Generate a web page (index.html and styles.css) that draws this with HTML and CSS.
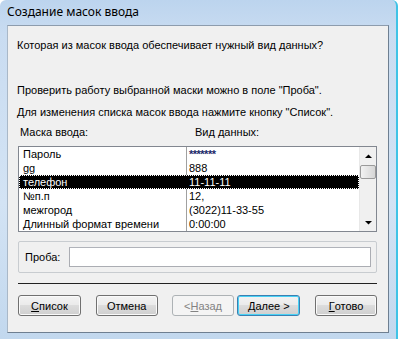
FILE: index.html
```html
<!DOCTYPE html>
<html lang="ru">
<head>
<meta charset="utf-8">
<link rel="stylesheet" href="styles.css">
</head>
<body>
<div class="window">
  <div class="titlebar">Создание масок ввода</div>
  <div class="client">
    <p class="question">Которая из масок ввода обеспечивает нужный вид данных?</p>
    <p class="hint hint1">Проверить работу выбранной маски можно в поле "Проба".</p>
    <p class="hint hint2">Для изменения списка масок ввода нажмите кнопку "Список".</p>
    <div class="headers"><span class="h1">Маска ввода:</span><span class="h2">Вид данных:</span></div>
    <div class="listbox">
      <div class="rows">
        <div class="row"><span class="c1">Пароль</span><span class="c2 stars">*******</span></div>
        <div class="row"><span class="c1">gg</span><span class="c2">888</span></div>
        <div class="row sel"><span class="c1">телефон</span><span class="c2">11-11-11</span></div>
        <div class="row"><span class="c1">№п.п</span><span class="c2">12,</span></div>
        <div class="row"><span class="c1">межгород</span><span class="c2">(3022)11-33-55</span></div>
        <div class="row"><span class="c1">Длинный формат времени</span><span class="c2">0:00:00</span></div>
      </div>
      <div class="scrollbar">
        <div class="arrow"><svg width="7" height="4" viewBox="0 0 7 4"><path d="M0 4h7L3.5 0.5z" fill="#000"/></svg></div>
        <div class="track"><div class="thumb"></div></div>
        <div class="arrow"><svg width="7" height="4" viewBox="0 0 7 4"><path d="M0 0h7L3.5 3.5z" fill="#000"/></svg></div>
      </div>
    </div>
    <div class="group">
      <span class="plabel">Проба:</span>
      <div class="input"></div>
    </div>
    <div class="separator"></div>
    <div class="buttons">
      <div class="btn b-list"><u>С</u>писок</div>
      <div class="btn b-cancel">Отмена</div>
      <div class="btn b-back disabled">&lt; <u>Н</u>азад</div>
      <div class="btn b-next focus"><u>Д</u>алее &gt;</div>
      <div class="btn b-done"><u>Г</u>отово</div>
    </div>
  </div>
</div>
</body>
</html>
```
FILE: styles.css
```css
html, body {
  margin: 0;
  padding: 0;
  width: 398px;
  height: 339px;
  overflow: hidden;
  background: #fff;
}
.window {
  box-sizing: border-box;
  width: 398px;
  height: 339px;
  display: flex;
  flex-direction: column;
  padding: 0 7px 6px 7px;
  background: linear-gradient(180deg, #bcd4ee 0%, #c9dcf1 10%, #d3e3f4 60%, #c2d8ee 100%);
  border-right: 2px solid #3fc3e6;
  border-radius: 6px 6px 0 0;
  font-family: "Liberation Sans", Arial, sans-serif;
  font-size: 11px;
  color: #000;
}
.titlebar {
  height: 25px;
  line-height: 24px;
  font-family: "Noto Sans", "Open Sans", sans-serif;
  font-size: 12px;
  color: #000;
  flex: none;
}
.client {
  flex: 1;
  background: #f0f0f0;
  border: 1px solid #6e7f91;
  border-left-color: #a9b8c8;
  border-top-color: #8d9cad;
  padding: 12px 11px 0 10px;
  display: flex;
  flex-direction: column;
}
p { margin: 0; line-height: 14px; }
.question { margin-left: -1px; }
.hint1 { margin-top: 31px; margin-left: -1px; }
.hint2 { margin-top: 8px; margin-left: -1px; }
.headers {
  margin-top: 6px;
  line-height: 14px;
  display: flex;
}
.h1 { margin-left: 2px; width: 175px; }
.listbox {
  margin-top: 7px;
  height: 86px;
  box-sizing: border-box;
  border: 1px solid #828790;
  background: #fff;
  display: flex;
}
.rows { flex: 1; }
.row {
  height: 14px;
  line-height: 14px;
  display: flex;
  box-sizing: border-box;
}
.c1 {
  width: 168px;
  padding-left: 4px;
  box-sizing: border-box;
  border-right: 1px solid #a0a0a0;
  white-space: nowrap;
}
.c2 { padding-left: 2px; }
.stars { color: #1a2a6a; font-weight: bold; letter-spacing: -0.5px; }
.row.sel {
  background: #000;
  color: #fff;
  outline: 1px dotted #fff;
  outline-offset: -1px;
}
.row.sel .c1 { border-right-color: #000; }
.scrollbar {
  width: 17px;
  display: flex;
  flex-direction: column;
  background: #f0f0f0;
  border-left: 1px solid #e8e8e8;
  box-sizing: border-box;
}
.arrow {
  height: 17px;
  display: flex;
  align-items: center;
  justify-content: center;
}
.track { flex: 1; padding-top: 1px; }
.thumb {
  height: 14px;
  border: 1px solid #9a9a9a;
  border-radius: 2px;
  background: linear-gradient(90deg, #f2f2f2, #e4e4e4 50%, #d6d6d6);
  box-sizing: border-box;
}
.group {
  margin-top: 9px;
  height: 32px;
  box-sizing: border-box;
  border: 1px solid #c8ccd0;
  border-radius: 2px;
  display: flex;
  align-items: center;
  padding-left: 6px;
  padding-right: 5px;
}
.plabel { width: 44px; }
.input {
  flex: 1;
  height: 20px;
  box-sizing: border-box;
  background: #fff;
  border: 1px solid #abadb3;
  border-top-color: #b0b3ba;
}
.separator {
  margin-top: 10px;
  height: 1px;
  background: #222;
}
.buttons {
  margin-top: 11px;
  display: flex;
}
.btn {
  width: 63px;
  height: 21px;
  box-sizing: border-box;
  border: 1px solid #707070;
  border-radius: 3px;
  background: linear-gradient(180deg, #f3f3f3 0%, #ebebeb 45%, #dcdcdc 50%, #cfcfcf 100%);
  box-shadow: inset 0 0 0 1px #fafafa;
  display: flex;
  align-items: center;
  justify-content: center;
  line-height: 14px;
}
.btn u { text-decoration: underline; text-underline-offset: 1px; }
.b-cancel { margin-left: 15px; width: 62px; }
.b-back { margin-left: 14px; }
.b-next { margin-left: 3px; }
.b-done { margin-left: 15px; width: 62px; }
.btn.disabled {
  border-color: #adb2b5;
  background: #f4f4f4;
  color: #838383;
  box-shadow: none;
}
.btn.focus {
  border-color: #3c7fb1;
  box-shadow: inset 0 0 0 1px #48d1f5;
}
```
